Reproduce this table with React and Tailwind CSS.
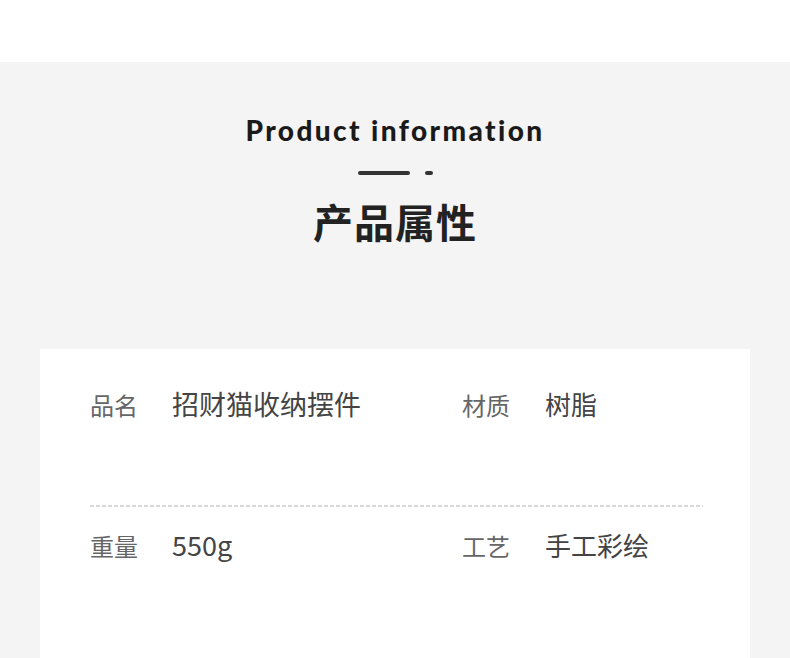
export default function App() {
  const cjk = { fontFamily: '"Noto Sans CJK SC", "Noto Sans", sans-serif' };
  return (
    <div className="w-[790px] h-[658px] overflow-hidden bg-white">
      <div className="h-[62px] bg-white" />
      <div className="bg-[#f4f4f4] h-[596px] flex flex-col items-center">
        <div
          className="mt-[50px] text-[28px] leading-[36px] font-black text-[#1a1a1a] tracking-[2.4px]"
          style={{ fontFamily: 'Lato, "DejaVu Sans", sans-serif' }}
        >
          Product information
        </div>
        <div className="mt-[23px] flex items-center gap-[15px]">
          <div className="w-[52px] h-[4px] rounded-full bg-[#333]" />
          <div className="w-[8px] h-[4px] rounded-full bg-[#333]" />
        </div>
        <div className="mt-[20px] text-[40px] leading-[52px] font-bold text-[#222] tracking-[1px]" style={cjk}>
          产品属性
        </div>
        <div className="mt-[102px] self-stretch mx-[40px] bg-white flex-1 pl-[50px] pr-[47px]" style={cjk}>
          <div className="h-[156px] pt-[38px] flex">
            <div className="w-[372px] flex items-baseline">
              <span className="w-[82px] text-[24px] leading-[34px] text-[#666]">品名</span>
              <span className="text-[27px] leading-[34px] text-[#444]">招财猫收纳摆件</span>
            </div>
            <div className="flex items-baseline">
              <span className="w-[83px] text-[24px] leading-[34px] text-[#666]">材质</span>
              <span className="text-[26px] leading-[34px] text-[#444]">树脂</span>
            </div>
          </div>
          <div className="h-[2px] bg-[repeating-linear-gradient(90deg,#d9d9d9_0_4px,transparent_4px_6px)]" />
          <div className="pt-[21px] flex">
            <div className="w-[372px] flex items-baseline">
              <span className="w-[82px] text-[24px] leading-[34px] text-[#666]">重量</span>
              <span className="text-[27px] leading-[34px] text-[#444]">550g</span>
            </div>
            <div className="flex items-baseline">
              <span className="w-[83px] text-[24px] leading-[34px] text-[#666]">工艺</span>
              <span className="text-[26px] leading-[34px] text-[#444]">手工彩绘</span>
            </div>
          </div>
        </div>
      </div>
    </div>
  );
}
